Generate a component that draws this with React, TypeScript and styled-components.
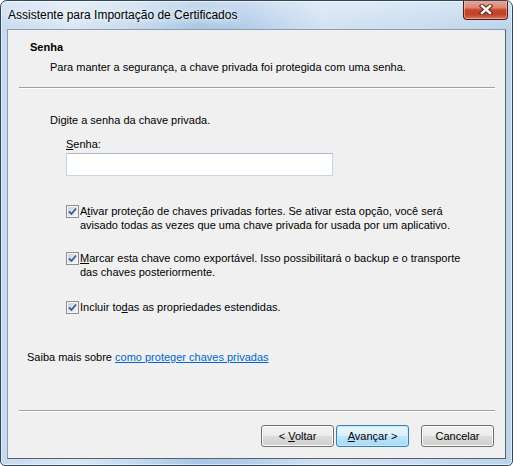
import React from "react"
import styled, { createGlobalStyle } from "styled-components"

const GlobalStyle = createGlobalStyle`
  html, body {
    margin: 0;
    padding: 0;
    background: #ffffff;
  }
  body {
    font-family: "Liberation Sans", Arial, sans-serif;
    font-size: 11px;
    color: #000000;
  }
`

const Window = styled.div`
  box-sizing: border-box;
  width: 513px;
  height: 466px;
  display: flex;
  flex-direction: column;
  padding: 0 6px 6px 6px;
  border: 1px solid #33465a;
  border-radius: 7px 7px 5px 5px;
  background:
    linear-gradient(180deg, rgba(255, 255, 255, 0.35) 0, rgba(255, 255, 255, 0) 28px),
    linear-gradient(90deg, #c6daef 0%, #d9e7f5 14%, #c4d9ee 27%, #a9c7e6 38%, #b1cbe8 47%, #d2e2f3 63%, #c9dcf0 82%, #bcd3eb 100%);
  box-shadow: inset 0 0 0 1px rgba(255, 255, 255, 0.55);
  overflow: hidden;
`

const TitleBar = styled.div`
  height: 28px;
  display: flex;
  justify-content: space-between;
  align-items: flex-start;
`

const Title = styled.div`
  padding: 7px 0 0 1px;
  font-size: 12px;
  line-height: 15px;
  color: #000;
  text-shadow: 0 0 6px rgba(255, 255, 255, 0.95), 0 0 10px rgba(255, 255, 255, 0.8);
`

const CloseButton = styled.div`
  box-sizing: border-box;
  width: 45px;
  height: 20px;
  margin: -1px -2px 0 0;
  display: flex;
  align-items: center;
  justify-content: center;
  border: 1px solid #4f1a12;
  border-top: none;
  border-radius: 0 0 4px 4px;
  background: linear-gradient(180deg, #e8ab9e 0%, #dc8670 40%, #c8462f 52%, #c3402a 75%, #d8775c 100%);
  box-shadow: inset 0 0 0 1px rgba(255, 220, 210, 0.45);
`

const Client = styled.div`
  flex: 1;
  display: flex;
  flex-direction: column;
  background: #f0f0f0;
  border: 1px solid #8d9cab;
  border-right-color: #56616d;
  border-bottom-color: #56616d;
`

const Header = styled.div`
  padding: 10px 0 0 22px;
`

const HeaderTitle = styled.div`
  font-weight: bold;
  line-height: 14px;
`

const HeaderText = styled.div`
  margin: 6px 0 0 20px;
  line-height: 14px;
`

const Separator = styled.div<{ $top: number }>`
  margin: ${ p => p.$top }px 10px 0 11px;
  border-top: 1px solid #a0a0a0;
  border-bottom: 1px solid #ffffff;
`

const Body = styled.div`
  padding: 24px 0 0 42px;
`

const Line = styled.div`
  line-height: 14px;
  white-space: nowrap;
`

const Field = styled.div`
  margin: 10px 0 0 16px;
  display: flex;
  flex-direction: column;
  gap: 2px;
`

const Input = styled.input`
  box-sizing: border-box;
  width: 267px;
  height: 23px;
  margin: 0;
  padding: 2px 3px;
  font: inherit;
  background: #ffffff;
  border: 1px solid #c6d5e6;
  border-top-color: #a7bad0;
  outline: none;
`

const CheckRow = styled.div<{ $top: number }>`
  margin: ${ p => p.$top }px 0 0 16px;
  display: flex;
  align-items: flex-start;
  gap: 1px;
`

const Box = styled.span`
  box-sizing: border-box;
  flex: none;
  width: 13px;
  height: 13px;
  margin-top: 1px;
  display: flex;
  align-items: center;
  justify-content: center;
  border: 1px solid #8e8f8f;
  background: linear-gradient(135deg, #c4ccd6 0%, #e3e8ee 55%, #f6f8fa 100%);
  box-shadow: inset 0 0 0 1px #f4f4f4;
`

const Acc = styled.span`
  text-decoration: underline;
`

const More = styled.div`
  margin: 36px 0 0 19px;
  line-height: 14px;
`

const Link = styled.a`
  color: #0066cc;
  text-decoration: underline;
  cursor: pointer;
`

const Footer = styled.div`
  margin-top: auto;
  padding-bottom: 11px;
`

const Buttons = styled.div`
  display: flex;
  justify-content: flex-end;
  padding: 13px 11px 0 0;
`

const Button = styled.button<{ $primary?: boolean; $gap?: number }>`
  box-sizing: border-box;
  width: 73px;
  height: 22px;
  margin: 0 0 0 ${ p => p.$gap || 0 }px;
  padding: 0;
  font: inherit;
  color: #000;
  border-radius: 3px;
  border: 1px solid ${ p => p.$primary ? "#3c7fb1" : "#707070" };
  background: ${ p => p.$primary
    ? "linear-gradient(180deg, #eaf6fd 0%, #d9f0fc 50%, #bee6fd 50%, #a7d9f5 100%)"
    : "linear-gradient(180deg, #f2f2f2 0%, #ebebeb 50%, #dddddd 50%, #cfcfcf 100%)" };
  box-shadow: inset 0 0 0 1px ${ p => p.$primary ? "#c5e9fc" : "#fcfcfc" };
`

const Check = () => (
  <Box>
    <svg width="9" height="9" viewBox="0 0 9 9">
      <path d="M1 4.5 L3.5 7 L8 1.5" fill="none" stroke="#3a5a9a" strokeWidth="1.8" />
    </svg>
  </Box>
)

const CloseIcon = () => (
  <svg width="14" height="11" viewBox="0 0 14 11">
    <path d="M3 2 L11 9 M11 2 L3 9" stroke="#5a2219" strokeWidth="4.4" strokeLinecap="square" />
    <path d="M3 2 L11 9 M11 2 L3 9" stroke="#ffffff" strokeWidth="2.4" strokeLinecap="square" />
  </svg>
)

const App = () => (
  <Window>
    <GlobalStyle />
    <TitleBar>
      <Title>Assistente para Importação de Certificados</Title>
      <CloseButton><CloseIcon /></CloseButton>
    </TitleBar>
    <Client>
      <Header>
        <HeaderTitle>Senha</HeaderTitle>
        <HeaderText>Para manter a segurança, a chave privada foi protegida com uma senha.</HeaderText>
      </Header>
      <Separator $top={ 13 } />
      <Body>
        <Line>Digite a senha da chave privada.</Line>
        <Field>
          <Line><Acc>S</Acc>enha:</Line>
          <Input type="password" />
        </Field>
        <CheckRow $top={ 28 }>
          <Check />
          <div>
            <Line>A<Acc>t</Acc>ivar proteção de chaves privadas fortes. Se ativar esta opção, você será</Line>
            <Line>avisado todas as vezes que uma chave privada for usada por um aplicativo.</Line>
          </div>
        </CheckRow>
        <CheckRow $top={ 19 }>
          <Check />
          <div>
            <Line><Acc>M</Acc>arcar esta chave como exportável. Isso possibilitará o backup e o transporte</Line>
            <Line>das chaves posteriormente.</Line>
          </div>
        </CheckRow>
        <CheckRow $top={ 21 }>
          <Check />
          <Line>Incluir to<Acc>d</Acc>as as propriedades estendidas.</Line>
        </CheckRow>
      </Body>
      <More>Saiba mais sobre <Link>como proteger chaves privadas</Link></More>
      <Footer>
        <Separator $top={ 0 } />
        <Buttons>
          <Button>&lt; <Acc>V</Acc>oltar</Button>
          <Button $primary $gap={ 2 }><Acc>A</Acc>vançar &gt;</Button>
          <Button $gap={ 12 }>Cancelar</Button>
        </Buttons>
      </Footer>
    </Client>
  </Window>
)

export default App
